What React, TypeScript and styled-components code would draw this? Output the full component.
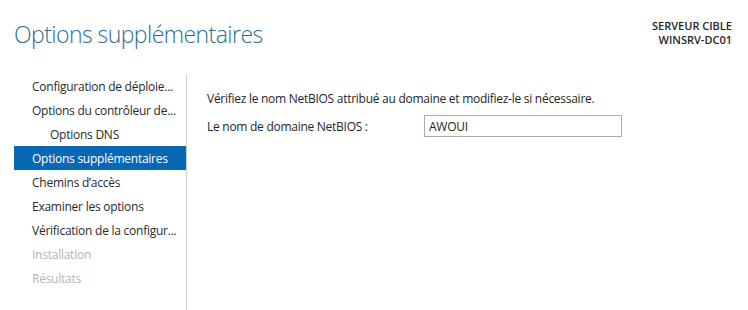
import React from "react";
import styled, { createGlobalStyle } from "styled-components";

const Global = createGlobalStyle`
  html, body { margin: 0; padding: 0; background: #ffffff; }
  body { font-family: "Open Sans", "Noto Sans", sans-serif; color: #1e1e1e; }
  * { box-sizing: border-box; }
`;

const Page = styled.div`
  width: 748px;
  height: 310px;
  display: flex;
  flex-direction: column;
  background: #fff;
  overflow: hidden;
`;

const Header = styled.header`
  height: 74px;
  display: flex;
  justify-content: space-between;
  align-items: flex-start;
  padding: 0 16px 0 14px;
`;

const Title = styled.h1`
  margin: 19px 0 0 0;
  font-family: "Open Sans", sans-serif;
  font-weight: 300;
  font-size: 23px;
  line-height: 30px;
  color: #2a6e93;
  letter-spacing: -0.55px;
`;

const Target = styled.div`
  margin-top: 19px;
  text-align: right;
  font-size: 11px;
  font-weight: 600;
  line-height: 14px;
  color: #262626;
`;

const Body = styled.div`
  flex: 1;
  display: flex;
`;

const Sidebar = styled.nav`
  width: 187px;
  padding-left: 14px;
  border-right: 1px solid #cfcfcf;
  display: flex;
  flex-direction: column;
`;

const NavItem = styled.div<{ $active?: boolean; $disabled?: boolean; $indent?: boolean }>`
  height: 24px;
  display: flex;
  align-items: center;
  padding-left: ${(p) => (p.$indent ? 36 : 18)}px;
  padding-right: 4px;
  font-size: 12px;
  letter-spacing: -0.25px;
  white-space: nowrap;
  overflow: hidden;
  background: ${(p) => (p.$active ? "#0868b5" : "transparent")};
  color: ${(p) => (p.$active ? "#ffffff" : p.$disabled ? "#b4b4b4" : "#2a2a2a")};
`;

const Content = styled.main`
  flex: 1;
  padding: 16px 0 0 20px;
  font-size: 12px;
  letter-spacing: -0.27px;
  color: #262626;
`;

const Intro = styled.p`
  margin: 0;
  line-height: 17px;
`;

const FieldRow = styled.div`
  margin-top: 8px;
  display: flex;
  align-items: center;
`;

const Label = styled.label`
  width: 217px;
`;

const Input = styled.div`
  width: 198px;
  height: 22px;
  border: 1px solid #ababab;
  padding: 0 4px;
  display: flex;
  align-items: center;
  font-size: 12px;
  color: #1e1e1e;
`;

const items: { text: string; active?: boolean; disabled?: boolean; indent?: boolean }[] = [
  { text: "Configuration de déploie..." },
  { text: "Options du contrôleur de..." },
  { text: "Options DNS", indent: true },
  { text: "Options supplémentaires", active: true },
  { text: "Chemins d’accès" },
  { text: "Examiner les options" },
  { text: "Vérification de la configur..." },
  { text: "Installation", disabled: true },
  { text: "Résultats", disabled: true },
];

export default function App() {
  return (
    <Page>
      <Global />
      <Header>
        <Title>Options supplémentaires</Title>
        <Target>
          SERVEUR CIBLE
          <br />
          WINSRV-DC01
        </Target>
      </Header>
      <Body>
        <Sidebar>
          {items.map((it) => (
            <NavItem key={it.text} $active={it.active} $disabled={it.disabled} $indent={it.indent}>
              {it.text}
            </NavItem>
          ))}
        </Sidebar>
        <Content>
          <Intro>Vérifiez le nom NetBIOS attribué au domaine et modifiez-le si nécessaire.</Intro>
          <FieldRow>
            <Label>Le nom de domaine NetBIOS :</Label>
            <Input>AWOUI</Input>
          </FieldRow>
        </Content>
      </Body>
    </Page>
  );
}
